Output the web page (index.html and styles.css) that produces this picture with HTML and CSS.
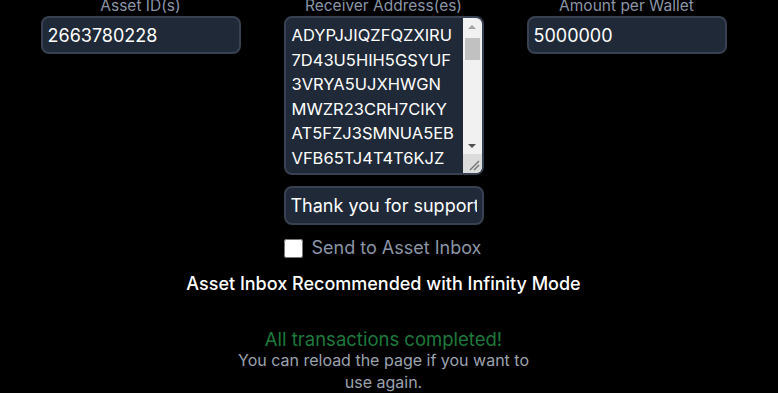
FILE: index.html
```html
<!DOCTYPE html>
<html>
<head>
<meta charset="utf-8">
<link rel="stylesheet" href="styles.css">
</head>
<body>
<div class="form">
  <div class="fields">
    <div class="field">
      <label class="label">Asset ID(s)</label>
      <input class="input" type="text" value="2663780228">
    </div>
    <div class="field">
      <label class="label">Receiver Address(es)</label>
      <div class="areabox">
        <textarea class="area">ADYPJJIQZFQZXIRU
7D43U5HIH5GSYUF
3VRYA5UJXHWGN
MWZR23CRH7CIKY
AT5FZJ3SMNUA5EB
VFB65TJ4T4T6KJZ
Q2MXLP4RKD7NVE
WS3HTG6YBOA2QF
LJ5C7PZX4DKRM
Y3UQNV6EHAW2TB
K7RJ2MZQ5XPL4DC
HT6GNWA3YEQ5BV
UO4FS2KDM7LR6X
P3ZQ5CJN8HTW2E
G5XRV4ABLM7DKY
QW2NS6PJ3TFUE
H4KZ7CRMX5LQAD
B2VNY6ETJ3WGSO
F7LPK4QZ2MXRDU
C5HWN3AYT6EBVG
M2SQ7DJK4ZPLXR
E6TVW3GHNA5YBQ
R4XUJ2KFMD7SLO
Z5PCQ6NHT3WAE
J7GYB2LRV4MKDX
T3QSN5EWA6HFZC
K2UMX7DPR4LJYO
V5BGH3ATQ6NWES
D4RZL7KCM2XPUJ</textarea>
        <div class="sbar">
          <div class="sbtn"><span class="tri up"></span></div>
          <div class="strack"><div class="sthumb"></div></div>
          <div class="sbtn"><span class="tri down"></span></div>
          <div class="scorner">
            <svg width="19" height="19" viewBox="0 0 19 19"><path d="M7 16 L16 7 M11 16 L16 11" stroke="#6e6e6e" stroke-width="1.3" fill="none"/></svg>
          </div>
        </div>
      </div>
      <input class="input note" type="text" value="Thank you for supporting us">
      <label class="check">
        <input type="checkbox" class="box">
        <span>Send to Asset Inbox</span>
      </label>
    </div>
    <div class="field">
      <label class="label">Amount per Wallet</label>
      <input class="input" type="text" value="5000000">
    </div>
  </div>
  <p class="title">Asset Inbox Recommended with Infinity Mode</p>
  <p class="done">All transactions completed!</p>
  <p class="hint">You can reload the page if you want to use again.</p>
</div>
</body>
</html>
```
FILE: styles.css
```css
body {
  margin: 0;
  background: #000;
  font-family: "Inter", "DejaVu Sans", sans-serif;
  overflow: hidden;
}
.form {
  width: 687px;
  margin: -4px 0 0 40px;
  display: flex;
  flex-direction: column;
  align-items: center;
}
.fields {
  display: flex;
  gap: 43px;
  align-items: flex-start;
}
.field {
  width: 200px;
  display: flex;
  flex-direction: column;
  align-items: center;
}
.label {
  color: #8b95a7;
  font-size: 15.5px;
  line-height: 20px;
}
.input {
  width: 200px;
  height: 38px;
  box-sizing: border-box;
  background: #1f2937;
  border: 2px solid #374151;
  border-radius: 8px;
  color: #fff;
  font-family: inherit;
  font-size: 18px;
  padding: 0 5px;
  outline: none;
}
.note {
  margin-top: 11px;
  height: 39px;
}
.areabox {
  width: 200px;
  height: 159px;
  box-sizing: border-box;
  background: #1f2937;
  border: 2px solid #374151;
  border-radius: 8px;
  overflow: hidden;
  display: flex;
}
.area {
  flex: 1;
  min-width: 0;
  height: 100%;
  box-sizing: border-box;
  background: transparent;
  border: none;
  color: #fff;
  font-family: inherit;
  font-size: 16.5px;
  line-height: 24.5px;
  padding: 5px 0 0 6px;
  outline: none;
  margin: 0;
  resize: none;
  overflow: hidden;
}
.sbar {
  width: 19px;
  flex: none;
  display: flex;
  flex-direction: column;
  background: #f1f1f1;
}
.sbtn {
  height: 17px;
  flex: none;
  display: flex;
  align-items: center;
  justify-content: center;
}
.tri {
  width: 0;
  height: 0;
  border-left: 4.5px solid transparent;
  border-right: 4.5px solid transparent;
}
.tri.up {
  border-bottom: 4.5px solid #a3a3a3;
}
.tri.down {
  border-top: 4.5px solid #505050;
}
.strack {
  flex: 1;
  padding-top: 3px;
}
.sthumb {
  height: 22px;
  margin: 0 2px;
  background: #c1c1c1;
}
.scorner {
  height: 19px;
  flex: none;
  background: #dcdcdc;
}
.scorner svg {
  display: block;
}
.check {
  margin-top: 12px;
  display: flex;
  align-items: center;
  width: 200px;
  gap: 9px;
  color: #8b95a7;
  font-size: 18px;
  line-height: 22px;
}
.box {
  width: 19px;
  height: 19px;
  margin: 0;
}
.title {
  margin: 13px 0 0;
  color: #fff;
  font-size: 18px;
  font-weight: 500;
  line-height: 24px;
}
.done {
  margin: 33px 0 0;
  color: #1e7a3c;
  font-size: 18.5px;
  line-height: 20px;
}
.hint {
  margin: 0;
  width: 300px;
  text-align: center;
  color: #9ca3af;
  font-size: 16px;
  line-height: 22px;
}
```
